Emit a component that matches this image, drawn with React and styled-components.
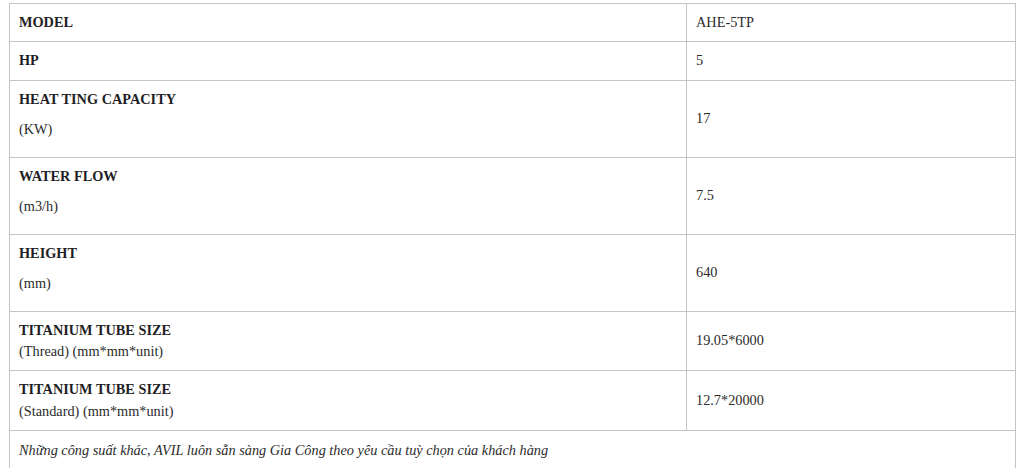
import React from 'react';
import styled, { createGlobalStyle } from 'styled-components';

const rows = [
  { title: 'MODEL', value: 'AHE-5TP' },
  { title: 'HP', value: '5' },
  { title: 'HEAT TING CAPACITY', unit: '(KW)', value: '17', spaced: true },
  { title: 'WATER FLOW', unit: '(m3/h)', value: '7.5', spaced: true },
  { title: 'HEIGHT', unit: '(mm)', value: '640', spaced: true },
  { title: 'TITANIUM TUBE SIZE', unit: '(Thread) (mm*mm*unit)', value: '19.05*6000' },
  { title: 'TITANIUM TUBE SIZE', unit: '(Standard) (mm*mm*unit)', value: '12.7*20000' },
];

const App = () => (
  <Page>
    <GlobalStyle />
    <SpecTable>
      <tbody>
        {rows.map((r, i) => (
          <tr key={i}>
            <LabelCell>
              {r.spaced ? (
                <>
                  <Para><b>{r.title}</b></Para>
                  <Para>{r.unit}</Para>
                </>
              ) : (
                <>
                  <b>{r.title}</b>
                  {r.unit && (<><br />{r.unit}</>)}
                </>
              )}
            </LabelCell>
            <ValueCell>{r.value}</ValueCell>
          </tr>
        ))}
        <tr>
          <NoteCell colSpan={2}>
            Những công suất khác, AVIL luôn sẵn sàng Gia Công theo yêu cầu tuỳ chọn của khách hàng
          </NoteCell>
        </tr>
      </tbody>
    </SpecTable>
  </Page>
);

const GlobalStyle = createGlobalStyle`
  html, body {
    margin: 0;
    background: #fff;
  }
`;

const Page = styled.div`
  padding: 3px 8px 0 9px;
  font-family: 'Liberation Serif', 'Times New Roman', serif;
  font-size: 14.3px;
  color: #2b2b2b;
`;

const SpecTable = styled.table`
  width: 1007px;
  border-collapse: collapse;
  border: 1px solid #c4c4c4;
  line-height: 1.5;

  b {
    font-weight: 700;
    color: #1e1e24;
  }
`;

const LabelCell = styled.td`
  width: 658px;
  padding: 8px 9px;
  border: 1px solid #c4c4c4;
  vertical-align: middle;
  text-align: left;
`;

const ValueCell = styled.td`
  padding: 8px 9px;
  border: 1px solid #c4c4c4;
  vertical-align: middle;
`;

const Para = styled.p`
  margin: 0 0 8.5px;
`;

const NoteCell = styled.td`
  padding: 9px 9px;
  border: 1px solid #c4c4c4;
  font-style: italic;
`;

export default App;
